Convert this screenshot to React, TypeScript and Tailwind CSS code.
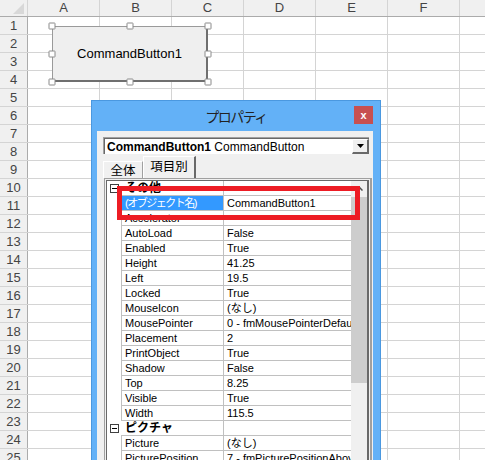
import React from "react";

type PropRow =
    | { kind: "cat"; label: string }
    | { kind: "prop"; name: string; value: string; selected?: boolean; jp?: boolean };

const COLS = ["A", "B", "C", "D", "E", "F", ""];
const ROW_COUNT = 25;

const PROPS: PropRow[] = [
    { kind: "cat", label: "その他" },
    { kind: "prop", name: "(オブジェクト名)", value: "CommandButton1", selected: true, jp: true },
    { kind: "prop", name: "Accelerator", value: "" },
    { kind: "prop", name: "AutoLoad", value: "False" },
    { kind: "prop", name: "Enabled", value: "True" },
    { kind: "prop", name: "Height", value: "41.25" },
    { kind: "prop", name: "Left", value: "19.5" },
    { kind: "prop", name: "Locked", value: "True" },
    { kind: "prop", name: "MouseIcon", value: "(なし)" },
    { kind: "prop", name: "MousePointer", value: "0 - fmMousePointerDefault" },
    { kind: "prop", name: "Placement", value: "2" },
    { kind: "prop", name: "PrintObject", value: "True" },
    { kind: "prop", name: "Shadow", value: "False" },
    { kind: "prop", name: "Top", value: "8.25" },
    { kind: "prop", name: "Visible", value: "True" },
    { kind: "prop", name: "Width", value: "115.5" },
    { kind: "cat", label: "ピクチャ" },
    { kind: "prop", name: "Picture", value: "(なし)" },
    { kind: "prop", name: "PicturePosition", value: "7 - fmPicturePositionAboveCenter" },
];

const HANDLES = [
    "left-0 top-0",
    "left-1/2 top-0",
    "left-full top-0",
    "left-0 top-1/2",
    "left-full top-1/2",
    "left-0 top-full",
    "left-1/2 top-full",
    "left-full top-full",
];

const FONT = "font-['Liberation_Sans','Noto_Sans_CJK_JP',sans-serif]";

const Sheet: React.FC = () => (
    <div className="flex flex-col">
        <div className="flex h-[17px] border-b border-[#ababab] bg-[#f0f0f0]">
            <div className="flex w-[28px] shrink-0 items-end justify-end border-r border-[#d4d4d4] pb-[2px] pr-[3px]">
                <svg width="11" height="11" viewBox="0 0 11 11">
                    <polygon points="11,0 11,11 0,11" fill="#d8d8d8" />
                </svg>
            </div>
            {COLS.map((c, i) => (
                <div
                    key={i}
                    className="w-[72px] shrink-0 border-r border-[#d4d4d4] text-center text-[13px] leading-[16px] text-[#444]"
                >
                    {c}
                </div>
            ))}
        </div>
        {Array.from({ length: ROW_COUNT }, (_, r) => (
            <div key={r} className="flex h-[18px] border-b border-[#d4d4d4]">
                <div className="w-[28px] shrink-0 border-r border-[#ababab] bg-[#f0f0f0] text-center text-[13px] leading-[17px] text-[#444]">
                    {r + 1}
                </div>
                {COLS.map((_, i) => (
                    <div key={i} className="w-[72px] shrink-0 border-r border-[#d4d4d4]" />
                ))}
            </div>
        ))}
    </div>
);

const ButtonControl: React.FC = () => (
    <div className="absolute left-[52px] top-[26px] h-[56px] w-[156px]">
        <div className="flex h-full w-full items-center justify-center border border-[#9a9a9a] border-b-2 border-r-2 border-b-[#6f6f6f] border-r-[#6f6f6f] bg-[#efefef] text-[13px] text-black">
            CommandButton1
        </div>
        {HANDLES.map((h) => (
            <span
                key={h}
                className={`absolute ${h} h-[7px] w-[7px] -translate-x-1/2 -translate-y-1/2 rounded-[1px] border border-[#8a8a8a] bg-white`}
            />
        ))}
    </div>
);

const PropGridRow: React.FC<{ row: PropRow }> = ({ row }) => {
    if (row.kind === "cat") {
        return (
            <div className="flex h-[15px]">
                <div className="flex w-[14px] shrink-0 items-center pl-[3px]">
                    <div className="flex h-[9px] w-[9px] items-center justify-center border border-[#404040] bg-white">
                        <div className="h-px w-[5px] bg-black" />
                    </div>
                </div>
                <div className="w-[102px] shrink-0 border-b border-[#c0c0c0] pl-[4px] text-[12px] font-bold leading-[14px] text-black">
                    {row.label}
                </div>
                <div className="min-w-0 flex-1 border-b border-l border-[#c0c0c0]" />
            </div>
        );
    }
    return (
        <div className="flex h-[15px]">
            <div className="w-[14px] shrink-0" />
            <div
                className={`w-[102px] shrink-0 overflow-hidden whitespace-nowrap border-b border-l border-[#c0c0c0] pl-[3px] text-[11px] leading-[14px] ${
                    row.selected ? "bg-[#3399ff] text-white" : "text-black"
                } ${row.jp ? "tracking-[-1.5px]" : ""}`}
            >
                {row.name}
            </div>
            <div className="min-w-0 flex-1 overflow-hidden whitespace-nowrap border-b border-l border-[#c0c0c0] pl-[3px] text-[11px] leading-[14px] text-black">
                {row.value}
            </div>
        </div>
    );
};

const PropertiesWindow: React.FC = () => (
    <div className="absolute left-[91px] top-[100px] flex h-[370px] w-[290px] flex-col border border-[#4a98e0] bg-[#63b1f7]">
        <div className="grid h-[30px] grid-cols-[1fr_auto_1fr]">
            <div />
            <div className="self-center font-['Noto_Sans_CJK_JP',sans-serif] text-[14px] leading-[16px] tracking-[-1.5px] text-[#222]">
                プロパティ
            </div>
            <div className="mr-[7px] mt-[5px] flex h-[18px] w-[19px] items-center justify-center justify-self-end bg-[#c75050] text-[11px] font-bold leading-none text-white">
                x
            </div>
        </div>
        <div className="ml-[5px] mr-[7px] flex min-h-0 flex-1 flex-col overflow-hidden bg-[#f0f0f0]">
            <div className="ml-[6px] mr-[4px] mt-[6px] h-[17px] shrink-0 border-l border-t border-[#a0a0a0] border-b-white border-r-white">
                <div className="flex h-full items-center border-l border-t border-[#696969] bg-white">
                    <div className="min-w-0 flex-1 overflow-hidden whitespace-nowrap pl-[2px] leading-[14px] text-black">
                        <span className="text-[12px] font-bold">CommandButton1</span>
                        <span className="text-[12px]"> CommandButton</span>
                    </div>
                    <div className="flex h-[15px] w-[17px] shrink-0 items-center justify-center border-l border-t border-white border-b-2 border-r-2 border-b-[#696969] border-r-[#696969] bg-[#f0f0f0]">
                        <svg width="7" height="4" viewBox="0 0 7 4">
                            <polygon points="0,0 7,0 3.5,4" fill="#000" />
                        </svg>
                    </div>
                </div>
            </div>
            <div className="ml-[6px] mt-[1px] flex h-[23px] shrink-0 items-end">
                <div className="flex h-[17px] w-[40px] items-center justify-center border-l border-t border-white border-r border-r-[#a0a0a0] font-['Noto_Sans_CJK_JP',sans-serif] text-[12.5px] text-black">
                    全体
                </div>
                <div className="flex h-[22px] w-[53px] items-center justify-center border-l border-t border-white border-r-2 border-r-[#696969] pb-[2px] font-['Noto_Sans_CJK_JP',sans-serif] text-[12.5px] text-black">
                    項目別
                </div>
            </div>
            <div className="ml-[7px] mr-px flex min-h-0 flex-1 border border-r-2 border-[#a0a0a0] bg-[#f0f0f0] p-px">
                <div className="flex min-w-0 flex-1 border border-r-2 border-[#696969] bg-white">
                    <div className="flex min-w-0 flex-1 flex-col">
                        {PROPS.map((row, i) => (
                            <PropGridRow key={i} row={row} />
                        ))}
                    </div>
                    <div className="flex w-[16px] shrink-0 flex-col bg-[#f0f0f0]">
                        <div className="flex h-[16px] items-center justify-center">
                            <svg width="7" height="4" viewBox="0 0 7 4">
                                <polyline points="0.5,3.5 3.5,0.5 6.5,3.5" fill="none" stroke="#505050" strokeWidth="1.5" />
                            </svg>
                        </div>
                        <div className="h-[186px] bg-[#cdcdcd]" />
                        <div className="flex-1" />
                    </div>
                </div>
            </div>
        </div>
    </div>
);

export default function App() {
    return (
        <div className={`h-[470px] w-[485px] bg-white ${FONT}`}>
            <div className="relative h-[460px] w-[485px] overflow-hidden">
                <Sheet />
                <ButtonControl />
                <PropertiesWindow />
                <div className="absolute left-[117px] top-[186px] h-[34px] w-[243px] border-[5px] border-[#ed1c24]" />
            </div>
        </div>
    );
}
